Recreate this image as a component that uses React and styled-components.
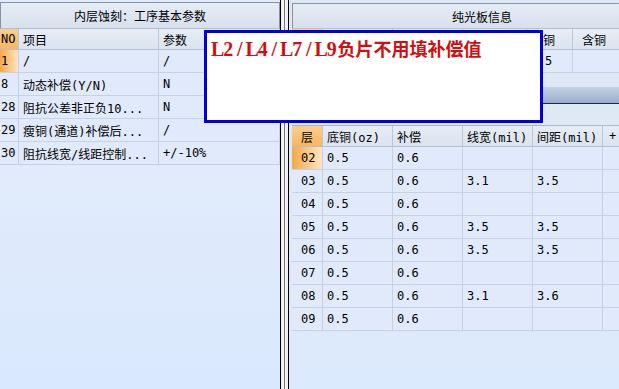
import styled, { createGlobalStyle } from "styled-components";

const GlobalStyle = createGlobalStyle`
  html, body {
    margin: 0;
    padding: 0;
    overflow: hidden;
    background: #dde9fb;
  }
  body {
    font-family: "DejaVu Sans Mono", "Noto Sans CJK SC", monospace;
    font-size: 12px;
    color: #000;
  }
`;

const Page = styled.div`
  position: relative;
  display: flex;
  width: 619px;
  height: 389px;
  overflow: hidden;
`;

const LeftPanel = styled.section`
  width: 280px;
  flex: none;
  padding-top: 2px;
  border-right: 1px solid #000;
  background: linear-gradient(#e1ebfb 0, #e1ebfb 170px, #d9e8fd 100%);
  overflow: hidden;
`;

const Splitter = styled.div`
  width: 7px;
  flex: none;
  background: linear-gradient(
    to right,
    #f0f0f0 0 3px,
    #7a7a7a 3px 4px,
    #f0f0f0 4px 100%
  );
`;

const RightPanel = styled.section`
  width: 380px;
  flex: none;
  padding: 3px 0 0 3px;
  border-left: 1px solid #000;
  background: linear-gradient(#dfe8f5 0, #dfe8f5 125px, #dceafd 100%);
  overflow: hidden;
`;

const TitleBar = styled.div`
  box-sizing: border-box;
  height: ${(p) => p.$h}px;
  display: flex;
  align-items: center;
  justify-content: center;
  border: 1px solid #8593a7;
  border-bottom-color: #b3c0d2;
  background: linear-gradient(#e6ecf4, #d7e0ec);
  font-family: "Noto Sans CJK SC", sans-serif;
  font-size: 12px;
`;

const Table = styled.div`
  display: grid;
  grid-template-columns: ${(p) => p.$cols};
  border-top: ${(p) => (p.$top ? "1px solid #a9b7ca" : "none")};
`;

const Cell = styled.div`
  box-sizing: border-box;
  height: ${(p) => (p.$head ? 21 : 23)}px;
  display: flex;
  align-items: center;
  padding-left: ${(p) => (p.$pad != null ? p.$pad : 4)}px;
  white-space: nowrap;
  overflow: hidden;
  border-right: 1px solid ${(p) => (p.$head ? "#bac7d8" : "#c6d2e3")};
  border-bottom: 1px solid ${(p) => (p.$head ? "#b3c0d2" : "#c6d2e3")};
  background: ${(p) =>
    p.$ind && p.$head
      ? "linear-gradient(#f9cf8f, #f6b660)"
      : p.$ind && p.$active
      ? "linear-gradient(to right, #f6a847, #fde5c2)"
      : p.$head
      ? "linear-gradient(#e7edf6, #dbe3ef)"
      : "#e0eafa"};
`;

const Gap = styled.div`
  height: ${(p) => p.$h}px;
`;

const ToolBar = styled.div`
  box-sizing: border-box;
  height: 17px;
  display: flex;
  border-bottom: 1px solid #1d2838;
  background: linear-gradient(#c5d2e5, #98adcc);
`;

const ToolButton = styled.div`
  box-sizing: border-box;
  width: 251px;
  margin: 1px 0;
  border: 1px solid #7788a2;
  background: linear-gradient(#ffffff, #e9eef6);
`;

const Notice = styled.div`
  position: absolute;
  left: 204px;
  top: 30px;
  width: 339px;
  height: 93px;
  box-sizing: border-box;
  padding: 5px 4px;
  border: 3px solid #0000dc;
  background: #fff;
  color: #d01010;
  font-family: "Noto Sans CJK SC", sans-serif;
  font-weight: 700;
  font-size: 18px;
  line-height: 20px;
  white-space: nowrap;
`;

// latin part of the notice is a fixed-pitch serif in the original
const NoticeChar = styled.span`
  display: inline-block;
  width: 11.5px;
  text-align: center;
  font-family: "Liberation Serif", serif;
  font-size: 20px;
`;

const leftRows = [
  ["1", "/", "/"],
  ["8", "动态补偿(Y/N)", "N"],
  ["28", "阻抗公差非正负10...", "N"],
  ["29", "瘦铜(通道)补偿后...", "/"],
  ["30", "阻抗线宽/线距控制...", "+/-10%"],
];

const layers = [
  ["02", "0.5", "0.6", "", ""],
  ["03", "0.5", "0.6", "3.1", "3.5"],
  ["04", "0.5", "0.6", "", ""],
  ["05", "0.5", "0.6", "3.5", "3.5"],
  ["06", "0.5", "0.6", "3.5", "3.5"],
  ["07", "0.5", "0.6", "", ""],
  ["08", "0.5", "0.6", "3.1", "3.6"],
  ["09", "0.5", "0.6", "", ""],
];

export default function App() {
  return (
    <Page>
      <GlobalStyle />
      <LeftPanel>
        <TitleBar $h={27}>内层蚀刻：工序基本参数</TitleBar>
        <Table $cols="19px 140px 1fr">
          <Cell $head $ind $pad={1}>NO</Cell>
          <Cell $head>项目</Cell>
          <Cell $head>参数</Cell>
          {leftRows.map((r, i) => [
            <Cell key={`n${i}`} $ind $active={i === 0} $pad={1}>{r[0]}</Cell>,
            <Cell key={`t${i}`}>{r[1]}</Cell>,
            <Cell key={`v${i}`}>{r[2]}</Cell>,
          ])}
        </Table>
      </LeftPanel>

      <Splitter />

      <RightPanel>
        <TitleBar $h={26}>纯光板信息</TitleBar>
        <Table $cols="31px 70px 70px 64px 46px 60px 1fr">
          <Cell $head $ind $pad={9} />
          <Cell $head />
          <Cell $head />
          <Cell $head />
          <Cell $head $pad={16}>铜</Cell>
          <Cell $head $pad={9}>含铜</Cell>
          <Cell $head />
          <Cell $ind $active $pad={9} />
          <Cell />
          <Cell />
          <Cell />
          <Cell $pad={18}>5</Cell>
          <Cell />
          <Cell />
        </Table>
        <Gap $h={14} />
        <ToolBar>
          <ToolButton />
        </ToolBar>
        <Gap $h={21} />
        <Table $top $cols="31px 70px 70px 70px 70px 1fr">
          <Cell $head $ind $pad={9}>层</Cell>
          <Cell $head>底铜(oz)</Cell>
          <Cell $head>补偿</Cell>
          <Cell $head>线宽(mil)</Cell>
          <Cell $head>间距(mil)</Cell>
          <Cell $head $pad={6}>+</Cell>
          {layers.map((r, i) => [
            <Cell key={`l${i}`} $ind $active={i === 0} $pad={9}>{r[0]}</Cell>,
            <Cell key={`c${i}`}>{r[1]}</Cell>,
            <Cell key={`b${i}`}>{r[2]}</Cell>,
            <Cell key={`w${i}`}>{r[3]}</Cell>,
            <Cell key={`s${i}`}>{r[4]}</Cell>,
            <Cell key={`x${i}`}></Cell>,
          ])}
        </Table>
      </RightPanel>

      <Notice>
        {"L2/L4/L7/L9".split("").map((ch, i) => (
          <NoticeChar key={i}>{ch}</NoticeChar>
        ))}
        负片不用填补偿值
      </Notice>
    </Page>
  );
}
